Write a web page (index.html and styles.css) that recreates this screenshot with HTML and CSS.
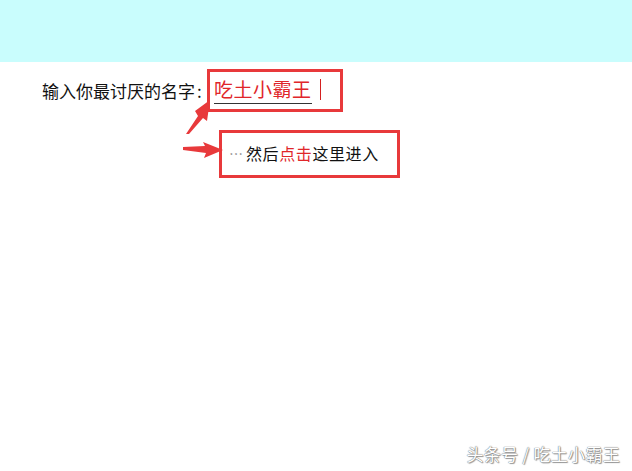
FILE: index.html
```html
<!DOCTYPE html>
<html lang="zh">
<head>
<meta charset="utf-8">
<link rel="stylesheet" href="styles.css">
</head>
<body>
<div class="page">
  <div class="band"></div>
  <div class="content">
    <div class="row1">
      <span class="label">输入你最讨厌的名字<span class="colon">:</span></span>
      <div class="box1">
        <span class="name">吃土小霸王</span>
        <span class="caret"></span>
      </div>
    </div>
    <div class="row2">
      <div class="box2">
        <span class="dots">…</span><span class="txt">然后<span class="red">点击</span>这里进入</span>
      </div>
    </div>
  </div>
  <svg class="arrows" width="632" height="471" viewBox="0 0 632 471">
    <polygon points="186,134 198,116 195,111 210,100 207,121 203,118 189,134" fill="#e8393b"/>
    <polygon points="183,147 205,146 203,142 223,150 204,158 206,153 183,150" fill="#e8393b"/>
  </svg>
  <div class="mark">头条号 / 吃土小霸王</div>
</div>
</body>
</html>
```
FILE: styles.css
```css
html, body {
  margin: 0;
  padding: 0;
  background: #ffffff;
}
.page {
  position: relative;
  width: 632px;
  height: 471px;
  overflow: hidden;
  font-family: "Noto Sans CJK SC", "Noto Sans", sans-serif;
}
.band {
  height: 62px;
  background: #c9fdfd;
}
.content {
  display: flex;
  flex-direction: column;
}
.row1 {
  display: flex;
  align-items: center;
  margin-top: 7px;
  padding-left: 42px;
}
.label {
  font-size: 17px;
  line-height: 20px;
  color: #111;
  width: 165px;
}
.colon {
  margin-left: 2px;
}
.box1 {
  box-sizing: border-box;
  width: 136px;
  height: 43px;
  border: 3px solid #e8393b;
  display: flex;
  align-items: flex-start;
  padding: 5px 0 0 4px;
}
.name {
  font-size: 19px;
  line-height: 24px;
  color: #e0262a;
  border-bottom: 1px solid #333;
  padding: 0 0 2px 0;
  letter-spacing: 0.5px;
}
.caret {
  width: 1px;
  height: 21px;
  background: #d42020;
  margin-left: 8px;
  margin-top: 2px;
}
.row2 {
  display: flex;
  margin-top: 18px;
  padding-left: 219px;
}
.box2 {
  box-sizing: border-box;
  width: 181px;
  height: 48px;
  border: 3px solid #e8393b;
  display: flex;
  align-items: center;
  padding: 0 0 2px 7px;
}
.dots {
  font-size: 14px;
  color: #888;
  margin-right: 3px;
}
.txt {
  font-size: 16px;
  color: #111;
  letter-spacing: 0.6px;
}
.red {
  color: #e0262a;
}
.arrows {
  position: absolute;
  left: 0;
  top: 0;
}
.mark {
  position: absolute;
  right: 12px;
  bottom: 5px;
  font-size: 17px;
  color: #ffffff;
  text-shadow: 0 0 1px #777, 0 0 1px #777, 1px 1px 1px #999;
  letter-spacing: 0.3px;
}
```
